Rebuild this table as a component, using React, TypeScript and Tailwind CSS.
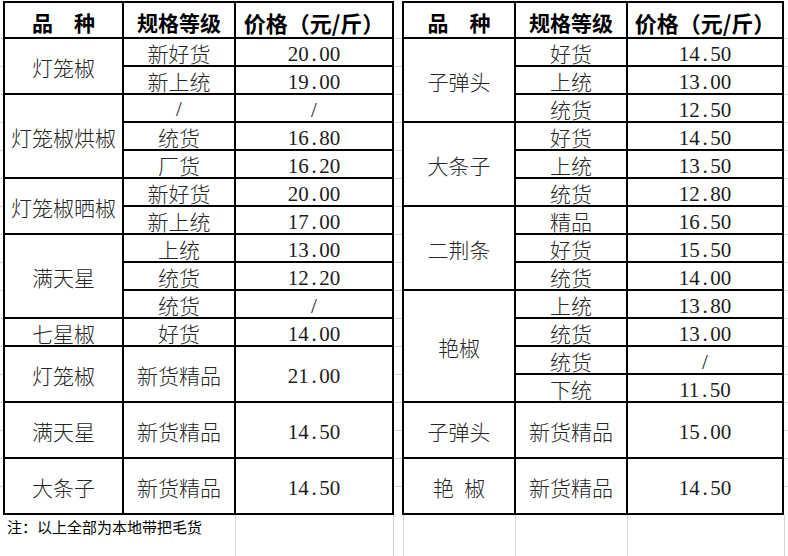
type Row = [string, string];
type Group = { name: string; span: string; big?: boolean; rows: Row[] };

const leftGroups: Group[] = [
  { name: '灯笼椒', span: 'row-span-2', rows: [['新好货', '20.00'], ['新上统', '19.00']] },
  { name: '灯笼椒烘椒', span: 'row-span-3', rows: [['/', '/'], ['统货', '16.80'], ['厂货', '16.20']] },
  { name: '灯笼椒晒椒', span: 'row-span-2', rows: [['新好货', '20.00'], ['新上统', '17.00']] },
  { name: '满天星', span: 'row-span-3', rows: [['上统', '13.00'], ['统货', '12.20'], ['统货', '/']] },
  { name: '七星椒', span: 'row-span-1', rows: [['好货', '14.00']] },
  { name: '灯笼椒', span: 'row-span-1', big: true, rows: [['新货精品', '21.00']] },
  { name: '满天星', span: 'row-span-1', big: true, rows: [['新货精品', '14.50']] },
  { name: '大条子', span: 'row-span-1', big: true, rows: [['新货精品', '14.50']] },
];

const rightGroups: Group[] = [
  { name: '子弹头', span: 'row-span-3', rows: [['好货', '14.50'], ['上统', '13.00'], ['统货', '12.50']] },
  { name: '大条子', span: 'row-span-3', rows: [['好货', '14.50'], ['上统', '13.50'], ['统货', '12.80']] },
  { name: '二荆条', span: 'row-span-3', rows: [['精品', '16.50'], ['好货', '15.50'], ['统货', '14.00']] },
  { name: '艳椒', span: 'row-span-4', rows: [['上统', '13.80'], ['统货', '13.00'], ['统货', '/'], ['下统', '11.50']] },
  { name: '子弹头', span: 'row-span-1', big: true, rows: [['新货精品', '15.00']] },
  { name: '艳\u2002椒', span: 'row-span-1', big: true, rows: [['新货精品', '14.50']] },
];

const cjk = "font-['Noto_Sans_CJK_SC',sans-serif]";

function Num({ v }: { v: string }) {
  return (
    <span className="font-['Liberation_Serif',serif] font-normal text-[21px] text-[#1c1c1c]">
      {v.split('').map((c, i) =>
        c === '.' ? (
          <span key={i} className="inline-block w-[10.5px] text-center">.</span>
        ) : (
          <span key={i}>{c}</span>
        )
      )}
    </span>
  );
}

function Cell({ children, className = '' }: { children: React.ReactNode; className?: string }) {
  return (
    <div className={`bg-white flex items-center justify-center leading-none whitespace-nowrap ${className}`}>
      {children}
    </div>
  );
}

function PriceTable({ groups, cols, rows }: { groups: Group[]; cols: string; rows: string }) {
  return (
    <div className={`grid ${cols} ${rows} gap-[2px] bg-black p-[2px] ${cjk} text-[21px] font-light text-[#262626]`}>
      <Cell className="font-bold text-black pt-[4px]">品{'\u3000'}种</Cell>
      <Cell className="font-bold text-black pt-[4px]">规格等级</Cell>
      <Cell className="font-bold text-black pt-[4px] text-[22px]">价格（元/斤）</Cell>
      {groups.map((g, gi) => (
        <div key={gi} className="contents">
          <Cell className={`${g.span} pt-[3px]`}>{g.name}</Cell>
          {g.rows.map(([grade, price], ri) => (
            <div key={ri} className="contents">
              <Cell className="pt-[3px]">{grade === '/' ? <Num v="/" /> : grade}</Cell>
              <Cell className="pt-[4px]">
                <Num v={price} />
              </Cell>
            </div>
          ))}
        </div>
      ))}
    </div>
  );
}

function Strip({ w }: { w: string }) {
  return (
    <div className={`${w} flex flex-col pt-[37px]`}>
      {Array.from({ length: 17 }).map((_, i) => (
        <div key={i} className="h-[28px] shrink-0 border-t border-[#d4d4d4]" />
      ))}
    </div>
  );
}

export default function App() {
  return (
    <div className="w-[788px] h-[556px] bg-white overflow-hidden flex flex-col">
      <div className="flex items-start pt-[1px]">
        <Strip w="w-[3px]" />
        <PriceTable
          groups={leftGroups}
          cols="grid-cols-[117px_110px_156px]"
          rows="grid-rows-[34px_repeat(11,26px)_repeat(3,54px)]"
        />
        <Strip w="w-[8px]" />
        <PriceTable
          groups={rightGroups}
          cols="grid-cols-[110px_110px_154px]"
          rows="grid-rows-[34px_repeat(13,26px)_repeat(2,54px)]"
        />
        <Strip w="w-[4px]" />
      </div>
      <div className="flex flex-1">
        <div className={`w-[236px] shrink-0 border-r border-[#d4d4d4] pl-[7px] pt-[2px] ${cjk} text-[15px] leading-[20px] text-black whitespace-nowrap`}>
          注：以上全部为本地带把毛货
        </div>
        <div className="w-[158px] shrink-0 border-r border-[#d4d4d4]" />
        <div className="w-[10px] shrink-0 border-r border-[#d4d4d4]" />
        <div className="w-[112px] shrink-0 border-r border-[#d4d4d4]" />
        <div className="w-[112px] shrink-0 border-r border-[#d4d4d4]" />
        <div className="w-[157px] shrink-0 border-r border-[#d4d4d4]" />
      </div>
    </div>
  );
}
